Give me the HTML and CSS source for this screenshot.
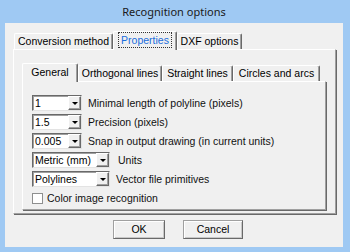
FILE: index.html
```html
<!DOCTYPE html>
<html>
<head>
<meta charset="utf-8">
<link rel="stylesheet" href="styles.css">
</head>
<body>
<div class="window">
  <div class="titlebar">Recognition options</div>
  <div class="client">
    <div class="tabs outer-tabs">
      <div class="tab t-conv">Conversion method</div>
      <div class="tab sel t-prop"><span class="focus">Properties</span></div>
      <div class="tab t-dxf">DXF options</div>
    </div>
    <div class="page outer-page">
      <div class="tabs inner-tabs">
        <div class="tab sel t-gen">General</div>
        <div class="tab t-orth">Orthogonal lines</div>
        <div class="tab t-str">Straight lines</div>
        <div class="tab t-circ">Circles and arcs</div>
      </div>
      <div class="page inner-page">
        <div class="row">
          <div class="combo"><span class="val">1</span><span class="drop"><span class="tri"></span></span></div>
          <span class="label">Minimal length of polyline (pixels)</span>
        </div>
        <div class="row">
          <div class="combo"><span class="val">1.5</span><span class="drop"><span class="tri"></span></span></div>
          <span class="label">Precision (pixels)</span>
        </div>
        <div class="row">
          <div class="combo"><span class="val">0.005</span><span class="drop"><span class="tri"></span></span></div>
          <span class="label">Snap in output drawing (in current units)</span>
        </div>
        <div class="row">
          <div class="combo wide"><span class="val">Metric (mm)</span><span class="drop"><span class="tri"></span></span></div>
          <span class="label units">Units</span>
        </div>
        <div class="row">
          <div class="combo wide"><span class="val">Polylines</span><span class="drop"><span class="tri"></span></span></div>
          <span class="label">Vector file primitives</span>
        </div>
        <div class="row check-row">
          <span class="checkbox"></span>
          <span class="label">Color image recognition</span>
        </div>
      </div>
    </div>
    <div class="buttons">
      <div class="btn btn-ok">OK</div>
      <div class="btn btn-cancel">Cancel</div>
    </div>
  </div>
</div>
</body>
</html>
```

FILE: styles.css
```css
html, body {
  margin: 0;
  padding: 0;
  background: #9fc9f3;
}
body {
  width: 350px;
  height: 252px;
  overflow: hidden;
  font-family: "Liberation Sans", Arial, sans-serif;
  font-size: 10.5px;
  color: #000;
}
.window {
  width: 350px;
  height: 252px;
  box-sizing: border-box;
  padding: 0 7px 5px 5px;
  display: flex;
  flex-direction: column;
}
.titlebar {
  height: 23px;
  line-height: 24px;
  text-align: center;
  font-family: "Noto Sans", sans-serif;
  font-size: 11px;
  color: #1a1a1a;
  flex: none;
}
.client {
  flex: 1;
  background: #f0f0f0;
  padding: 8px 6px 0 8px;
  box-sizing: border-box;
}
.tabs {
  display: flex;
  align-items: flex-end;
  height: 18px;
}
.outer-tabs {
  padding-left: 1px;
}
.tab {
  box-sizing: border-box;
  height: 16px;
  line-height: 15px;
  text-align: center;
  white-space: nowrap;
  border-top: 1px solid #fff;
  border-left: 1px solid #fff;
  border-right: 1px solid #696969;
  box-shadow: inset -1px 0 0 #a0a0a0;
  border-radius: 2px 2px 0 0;
}
.tab.sel {
  height: 19px;
  margin-bottom: -1px;
  line-height: 17px;
  position: relative;
  z-index: 1;
  background: #f0f0f0;
}
.t-conv { width: 99px; }
.t-prop { width: 64px; color: #1a6ddc; }
.t-dxf { width: 65px; }
.t-gen { width: 56px; }
.t-orth { width: 84px; }
.t-str { width: 71px; }
.t-circ { width: 87px; }
.focus {
  display: inline-block;
  line-height: 14px;
  padding: 0 2px;
  border: 1px dotted #333;
}
.page {
  box-sizing: border-box;
  border-top: 1px solid #fff;
  border-left: 1px solid #fff;
  border-right: 1px solid #a0a0a0;
  border-bottom: 1px solid #a0a0a0;
  box-shadow: 1px 1px 0 #696969;
}
.outer-page {
  width: 323px;
  height: 165px;
  padding: 13px 8px 2px 8px;
}
.inner-page {
  width: 304px;
  height: 129px;
  padding: 13px 0 0 9px;
  display: flex;
  flex-direction: column;
  gap: 3px;
}
.row {
  display: flex;
  align-items: center;
  gap: 6px;
  height: 16px;
}
.combo {
  box-sizing: border-box;
  width: 50px;
  height: 16px;
  background: #fff;
  border-top: 1px solid #696969;
  border-left: 1px solid #696969;
  border-right: 1px solid #e3e3e3;
  border-bottom: 1px solid #e3e3e3;
  box-shadow: inset 1px 1px 0 #a0a0a0;
  display: flex;
  align-items: stretch;
  flex: none;
}
.combo.wide {
  width: 78px;
}
.val {
  flex: 1;
  padding-left: 2px;
  line-height: 14px;
  white-space: nowrap;
  overflow: hidden;
}
.drop {
  box-sizing: border-box;
  width: 13px;
  background: #f0f0f0;
  border-top: 1px solid #fff;
  border-left: 1px solid #fff;
  border-right: 1px solid #696969;
  border-bottom: 1px solid #696969;
  box-shadow: inset -1px -1px 0 #a0a0a0;
  display: flex;
  align-items: center;
  justify-content: center;
}
.tri {
  width: 0;
  height: 0;
  border-left: 3px solid transparent;
  border-right: 3px solid transparent;
  border-top: 3px solid #000;
}
.label {
  white-space: nowrap;
  color: #111;
}
.units {
  margin-left: 2px;
}
.check-row {
  gap: 4px;
  margin-top: 1px;
  height: 14px;
}
.checkbox {
  box-sizing: border-box;
  width: 11px;
  height: 11px;
  background: #fff;
  border: 1px solid #8e8f8f;
  flex: none;
}
.buttons {
  display: flex;
  gap: 18px;
  padding-left: 100px;
  margin-top: 6px;
}
.btn {
  box-sizing: border-box;
  height: 19px;
  line-height: 17px;
  text-align: center;
  background: #f0f0f0;
  border-top: 1px solid #a0a0a0;
  border-left: 1px solid #a0a0a0;
  border-right: 1px solid #696969;
  border-bottom: 1px solid #696969;
  box-shadow: inset 1px 1px 0 #fff, inset -1px -1px 0 #c8c8c8;
}
.btn-ok { width: 52px; }
.btn-cancel { width: 60px; }
```
